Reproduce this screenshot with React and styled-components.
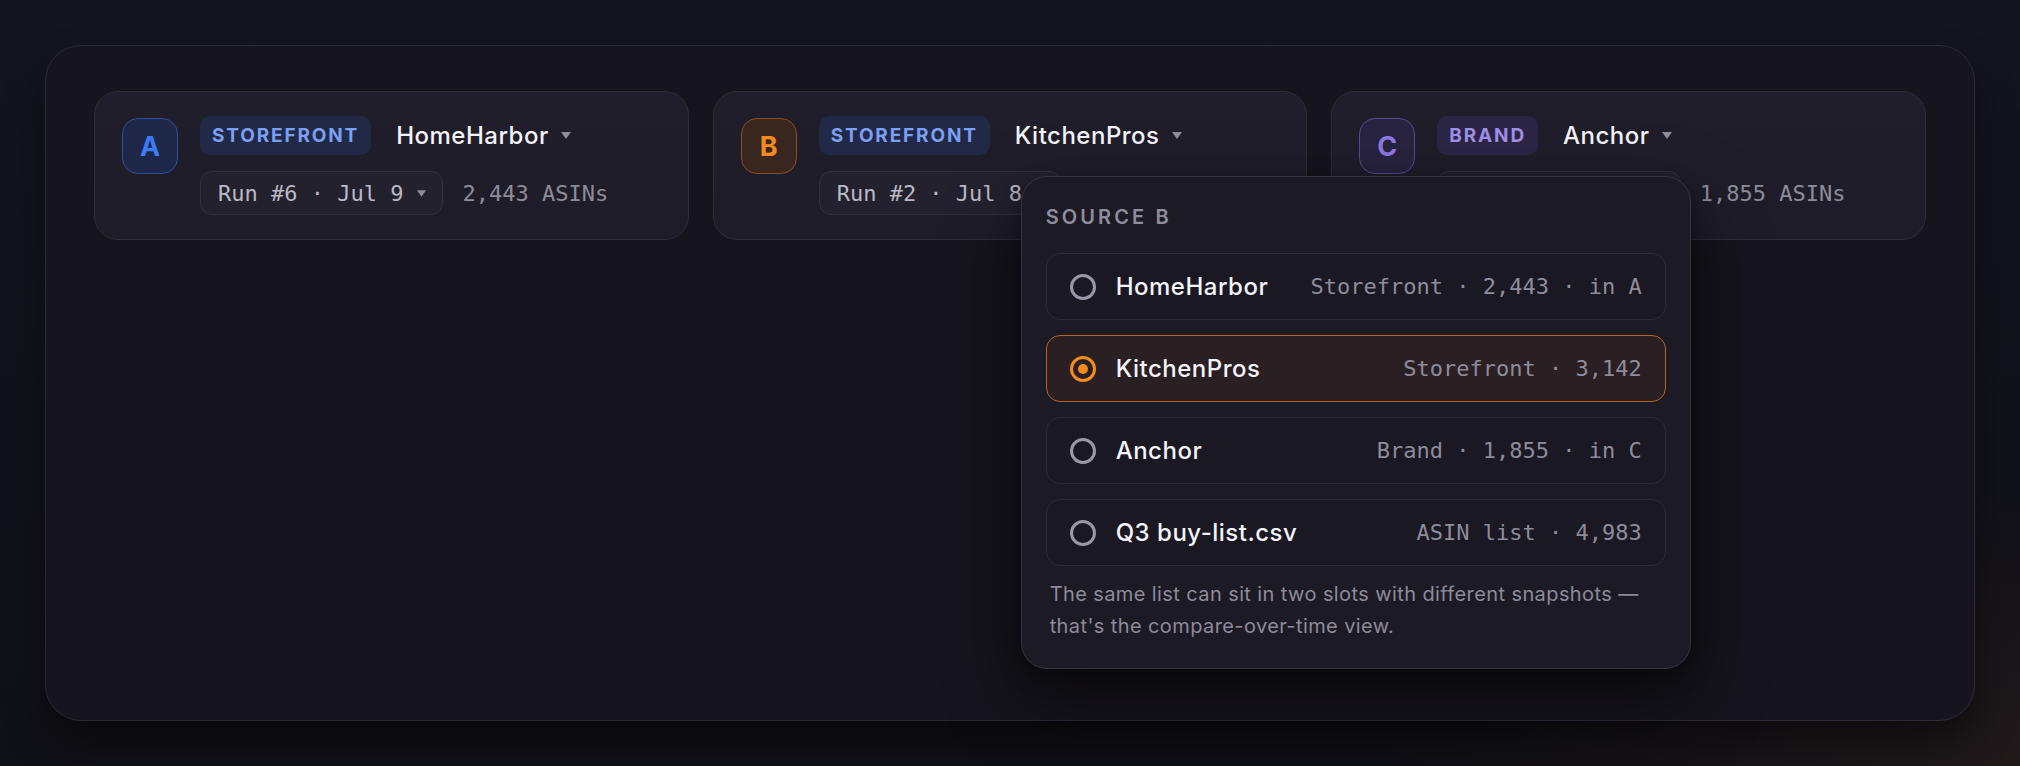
import React from "react";
import styled, { createGlobalStyle } from "styled-components";

const GlobalStyle = createGlobalStyle`
  html, body { margin: 0; padding: 0; }
  body {
    background: #111119;
    font-family: Inter, "Noto Sans", sans-serif;
  }
  * { box-sizing: border-box; }
`;

const SANS = `Inter, "Noto Sans", sans-serif`;
const MONO = `"DejaVu Sans Mono", "Liberation Mono", monospace`;

const Page = styled.div`
  width: 2020px;
  height: 766px;
  padding: 45px;
  background:
    radial-gradient(ellipse 900px 400px at 100% 100%, rgba(52, 36, 30, 0.45), transparent 70%),
    linear-gradient(180deg, #15151f 0%, #101017 100%);
`;

const Panel = styled.div`
  height: 100%;
  border: 1px solid #2c2a35;
  border-radius: 36px;
  background: #16141c;
  padding: 45px 48px;
  box-shadow: 0 24px 40px rgba(0, 0, 0, 0.45);
`;

const Slots = styled.div`
  display: grid;
  grid-template-columns: repeat(3, 1fr);
  gap: 24px;
`;

const Card = styled.div`
  position: relative;
  display: flex;
  align-items: flex-start;
  gap: 22px;
  padding: 24px 27px;
  border: 1px solid #2e2c39;
  border-radius: 24px;
  background: linear-gradient(180deg, #201e2a 0%, #1e1c28 100%);
`;

const palettes = {
  blue: { bg: "#1e2748", border: "#2e4f9e", fg: "#3b7cf6" },
  orange: { bg: "#38261f", border: "#8a4e22", fg: "#f58a1f" },
  purple: { bg: "#28233f", border: "#574a93", fg: "#8e78e2" },
};

const Badge = styled.div`
  flex: none;
  width: 56px;
  height: 56px;
  margin-top: 2px;
  border-radius: 16px;
  border: 1.5px solid ${(p) => palettes[p.$tone].border};
  background: ${(p) => palettes[p.$tone].bg};
  color: ${(p) => palettes[p.$tone].fg};
  display: flex;
  align-items: center;
  justify-content: center;
  font-family: ${SANS};
  font-weight: 700;
  font-size: 27px;
`;

const Info = styled.div`
  display: flex;
  flex-direction: column;
  gap: 16px;
  min-width: 0;
`;

const TopRow = styled.div`
  display: flex;
  align-items: center;
`;

const tagTones = {
  storefront: { bg: "#222946", fg: "#7b9ff3" },
  brand: { bg: "#2b2645", fg: "#a08fe6" },
};

const Tag = styled.span`
  height: 39px;
  display: inline-flex;
  align-items: center;
  padding: 0 12px;
  border-radius: 10px;
  background: ${(p) => tagTones[p.$kind].bg};
  color: ${(p) => tagTones[p.$kind].fg};
  font-family: ${SANS};
  font-weight: 700;
  font-size: 19px;
  letter-spacing: 1.85px;
`;

const Name = styled.span`
  margin-left: 25px;
  font-family: ${SANS};
  font-weight: 500;
  font-size: 24px;
  letter-spacing: 0.5px;
  color: #f4f3f8;
`;

const Caret = styled.svg`
  flex: none;
  margin-left: ${(p) => p.$gap}px;
  fill: #8f8d9b;
`;

const BottomRow = styled.div`
  display: flex;
  align-items: center;
  gap: 19px;
`;

const RunPill = styled.div`
  height: 44px;
  display: inline-flex;
  align-items: center;
  padding: 0 16px 0 17px;
  border: 1px solid #34323f;
  border-radius: 12px;
  background: #23212d;
  font-family: ${MONO};
  font-size: 22px;
  color: #bab8c5;
  white-space: nowrap;
`;

const Asins = styled.span`
  font-family: ${MONO};
  font-size: 22px;
  color: #8e8c9a;
  white-space: nowrap;
`;

const Popover = styled.div`
  position: absolute;
  left: 307px;
  top: 84px;
  width: 670px;
  z-index: 10;
  padding: 28px 24px 26px;
  border: 1px solid #36343f;
  border-radius: 26px;
  background: #1c1a25;
  box-shadow: 0 30px 70px rgba(0, 0, 0, 0.55), 0 8px 20px rgba(0, 0, 0, 0.35);
`;

const PopTitle = styled.div`
  font-family: ${SANS};
  font-weight: 600;
  font-size: 20px;
  line-height: 24px;
  letter-spacing: 3.1px;
  color: #8f8d9b;
  margin-bottom: 24px;
`;

const OptionList = styled.div`
  display: flex;
  flex-direction: column;
  gap: 15px;
`;

const Option = styled.div`
  height: 67px;
  display: flex;
  align-items: center;
  padding: 0 23px;
  border-radius: 14px;
  border: 1px solid ${(p) => (p.$selected ? "#b5661f" : "#2d2b38")};
  background: ${(p) => (p.$selected ? "#2a1f23" : "#1a1823")};
`;

const Radio = styled.span`
  flex: none;
  width: 26px;
  height: 26px;
  border-radius: 50%;
  border: 3px solid ${(p) => (p.$selected ? "#f28c1c" : "#9a98a6")};
  display: flex;
  align-items: center;
  justify-content: center;
  &::after {
    content: "";
    display: ${(p) => (p.$selected ? "block" : "none")};
    width: 10px;
    height: 10px;
    border-radius: 50%;
    background: #f28c1c;
  }
`;

const OptName = styled.span`
  margin-left: 20px;
  font-family: ${SANS};
  font-weight: 500;
  font-size: 24px;
  letter-spacing: 0.5px;
  color: #f4f3f8;
`;

const OptMeta = styled.span`
  margin-left: auto;
  font-family: ${MONO};
  font-size: 22px;
  color: #8e8c9a;
  white-space: nowrap;
`;

const Note = styled.p`
  margin: 12px 0 0;
  padding: 0 4px;
  font-family: ${SANS};
  font-weight: 400;
  font-size: 20px;
  line-height: 32px;
  letter-spacing: 0.4px;
  color: #8d8b99;
`;

const CaretIcon = ({ gap, w = 10, h = 7 }) => (
  <Caret $gap={gap} width={w} height={h} viewBox="0 0 10 7">
    <path d="M0 0 H10 L5 7 Z" />
  </Caret>
);

const slots = [
  {
    letter: "A",
    tone: "blue",
    kind: "storefront",
    tag: "STOREFRONT",
    name: "HomeHarbor",
    run: "Run #6 · Jul 9",
    asins: "2,443 ASINs",
  },
  {
    letter: "B",
    tone: "orange",
    kind: "storefront",
    tag: "STOREFRONT",
    name: "KitchenPros",
    run: "Run #2 · Jul 8",
    asins: "3,142 ASINs",
    open: true,
  },
  {
    letter: "C",
    tone: "purple",
    kind: "brand",
    tag: "BRAND",
    name: "Anchor",
    run: "Run #4 · Jul 7",
    asins: "1,855 ASINs",
  },
];

const options = [
  { name: "HomeHarbor", meta: "Storefront · 2,443 · in A" },
  { name: "KitchenPros", meta: "Storefront · 3,142", selected: true },
  { name: "Anchor", meta: "Brand · 1,855 · in C" },
  { name: "Q3 buy-list.csv", meta: "ASIN list · 4,983" },
];

export default function App() {
  return (
    <>
      <GlobalStyle />
      <Page>
        <Panel>
          <Slots>
            {slots.map((s) => (
              <Card key={s.letter}>
                <Badge $tone={s.tone}>{s.letter}</Badge>
                <Info>
                  <TopRow>
                    <Tag $kind={s.kind}>{s.tag}</Tag>
                    <Name>{s.name}</Name>
                    <CaretIcon gap={12} />
                  </TopRow>
                  <BottomRow>
                    <RunPill>
                      {s.run}
                      <CaretIcon gap={14} w={9} h={7} />
                    </RunPill>
                    <Asins>{s.asins}</Asins>
                  </BottomRow>
                </Info>
                {s.open && (
                  <Popover>
                    <PopTitle>SOURCE B</PopTitle>
                    <OptionList>
                      {options.map((o) => (
                        <Option key={o.name} $selected={o.selected}>
                          <Radio $selected={o.selected} />
                          <OptName>{o.name}</OptName>
                          <OptMeta>{o.meta}</OptMeta>
                        </Option>
                      ))}
                    </OptionList>
                    <Note>
                      The same list can sit in two slots with different snapshots — that's
                      the compare-over-time view.
                    </Note>
                  </Popover>
                )}
              </Card>
            ))}
          </Slots>
        </Panel>
      </Page>
    </>
  );
}
